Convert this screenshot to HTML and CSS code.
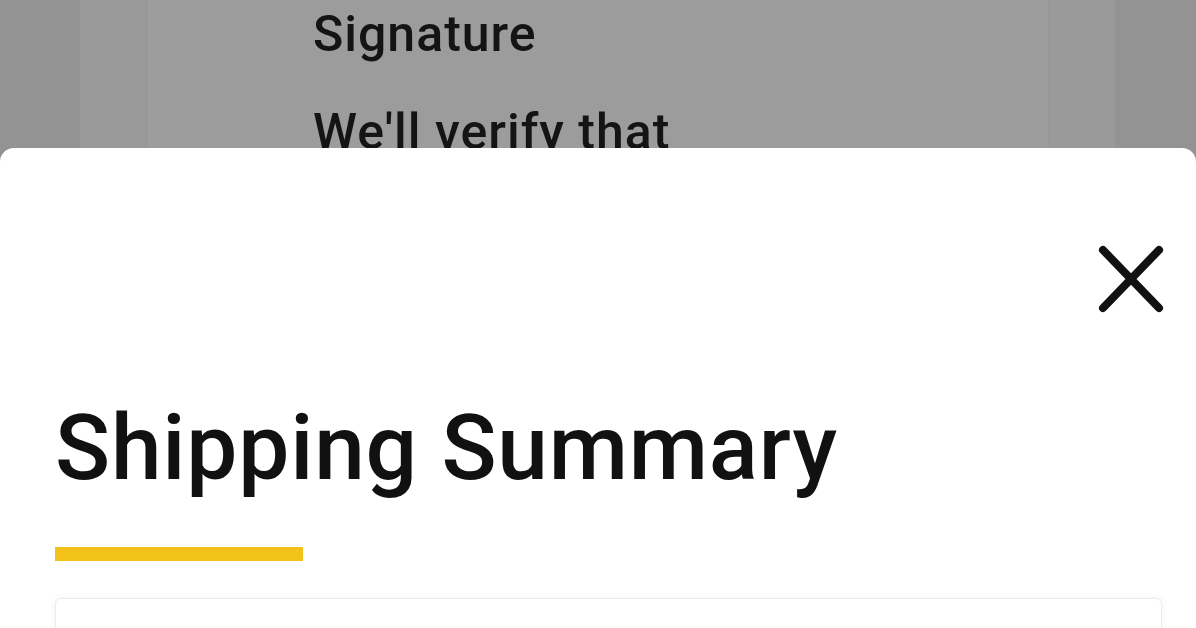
FILE: index.html
```html
<!DOCTYPE html>
<html lang="en">
<head>
    <meta charset="UTF-8">
    <meta name="viewport" content="width=device-width, initial-scale=1.0">
    <title>Shipping Summary</title>
    <link rel="stylesheet" href="styles.css">
</head>
<body>
    <!-- page behind the sheet, dimmed by the overlay -->
    <div class="backdrop">
        <div class="outer-panel">
            <div class="inner-panel">
                <p class="option-title">Signature</p>
                <p class="option-text">We'll verify that</p>
            </div>
        </div>
    </div>

    <div class="sheet">
        <div class="sheet-head">
            <button type="button" class="close-button" aria-label="Close">
                <svg width="68" height="70" viewBox="0 0 68 70">
                    <path d="M6 6 L62 64 M62 6 L6 64" stroke="#111" stroke-width="8" stroke-linecap="round" fill="none"/>
                </svg>
            </button>
        </div>
        <h1>Shipping Summary</h1>
        <div class="title-bar"></div>
        <div class="summary-card"></div>
    </div>
</body>
</html>
```

FILE: styles.css
```css
body {
    font-family: Roboto, "Noto Sans", Arial, sans-serif;
    background-color: #949393;
    margin: 0;
    padding: 0;
    height: 628px;
    overflow: hidden;
}

.backdrop {
    height: 100%;
    padding: 0 81px 0 80px;
}

.outer-panel {
    height: 100%;
    background-color: #9a9a9a;
    padding: 0 65px;
}

.inner-panel {
    height: 100%;
    background-color: #9c9c9c;
    border-left: 2px solid #979797;
    border-right: 2px solid #979797;
    padding: 4px 0 0 166px;
}

.option-title,
.option-text {
    margin: 0;
    font-size: 50px;
    font-weight: 500;
    line-height: 1.2;
    letter-spacing: 1px;
    color: #141414;
}

.option-text {
    margin-top: 38px;
}

/* bottom sheet over the page */
.sheet {
    position: absolute;
    top: 148px;
    left: 0;
    right: 0;
    bottom: 0;
    overflow: hidden;
    background-color: #fff;
    border-radius: 14px 14px 0 0;
    padding: 0 34px 0 55px;
}

.sheet-head {
    display: flex;
    justify-content: flex-end;
    padding-top: 96px;
}

.close-button {
    background: none;
    border: none;
    padding: 0;
    margin-right: -3px;
    cursor: pointer;
    display: block;
}

.close-button svg {
    display: block;
}

h1 {
    margin: 80px 0 0 0;
    font-size: 91px;
    font-weight: 500;
    line-height: 1.2;
    letter-spacing: 0.8px;
    color: #111;
}

.title-bar {
    width: 248px;
    height: 14px;
    margin-top: 44px;
    background-color: #f2c21b;
}

.summary-card {
    margin-top: 37px;
    height: 120px;
    border: 1px solid #ececec;
    border-radius: 6px;
    box-shadow: 0 0 6px rgba(0, 0, 0, 0.06);
}
```
